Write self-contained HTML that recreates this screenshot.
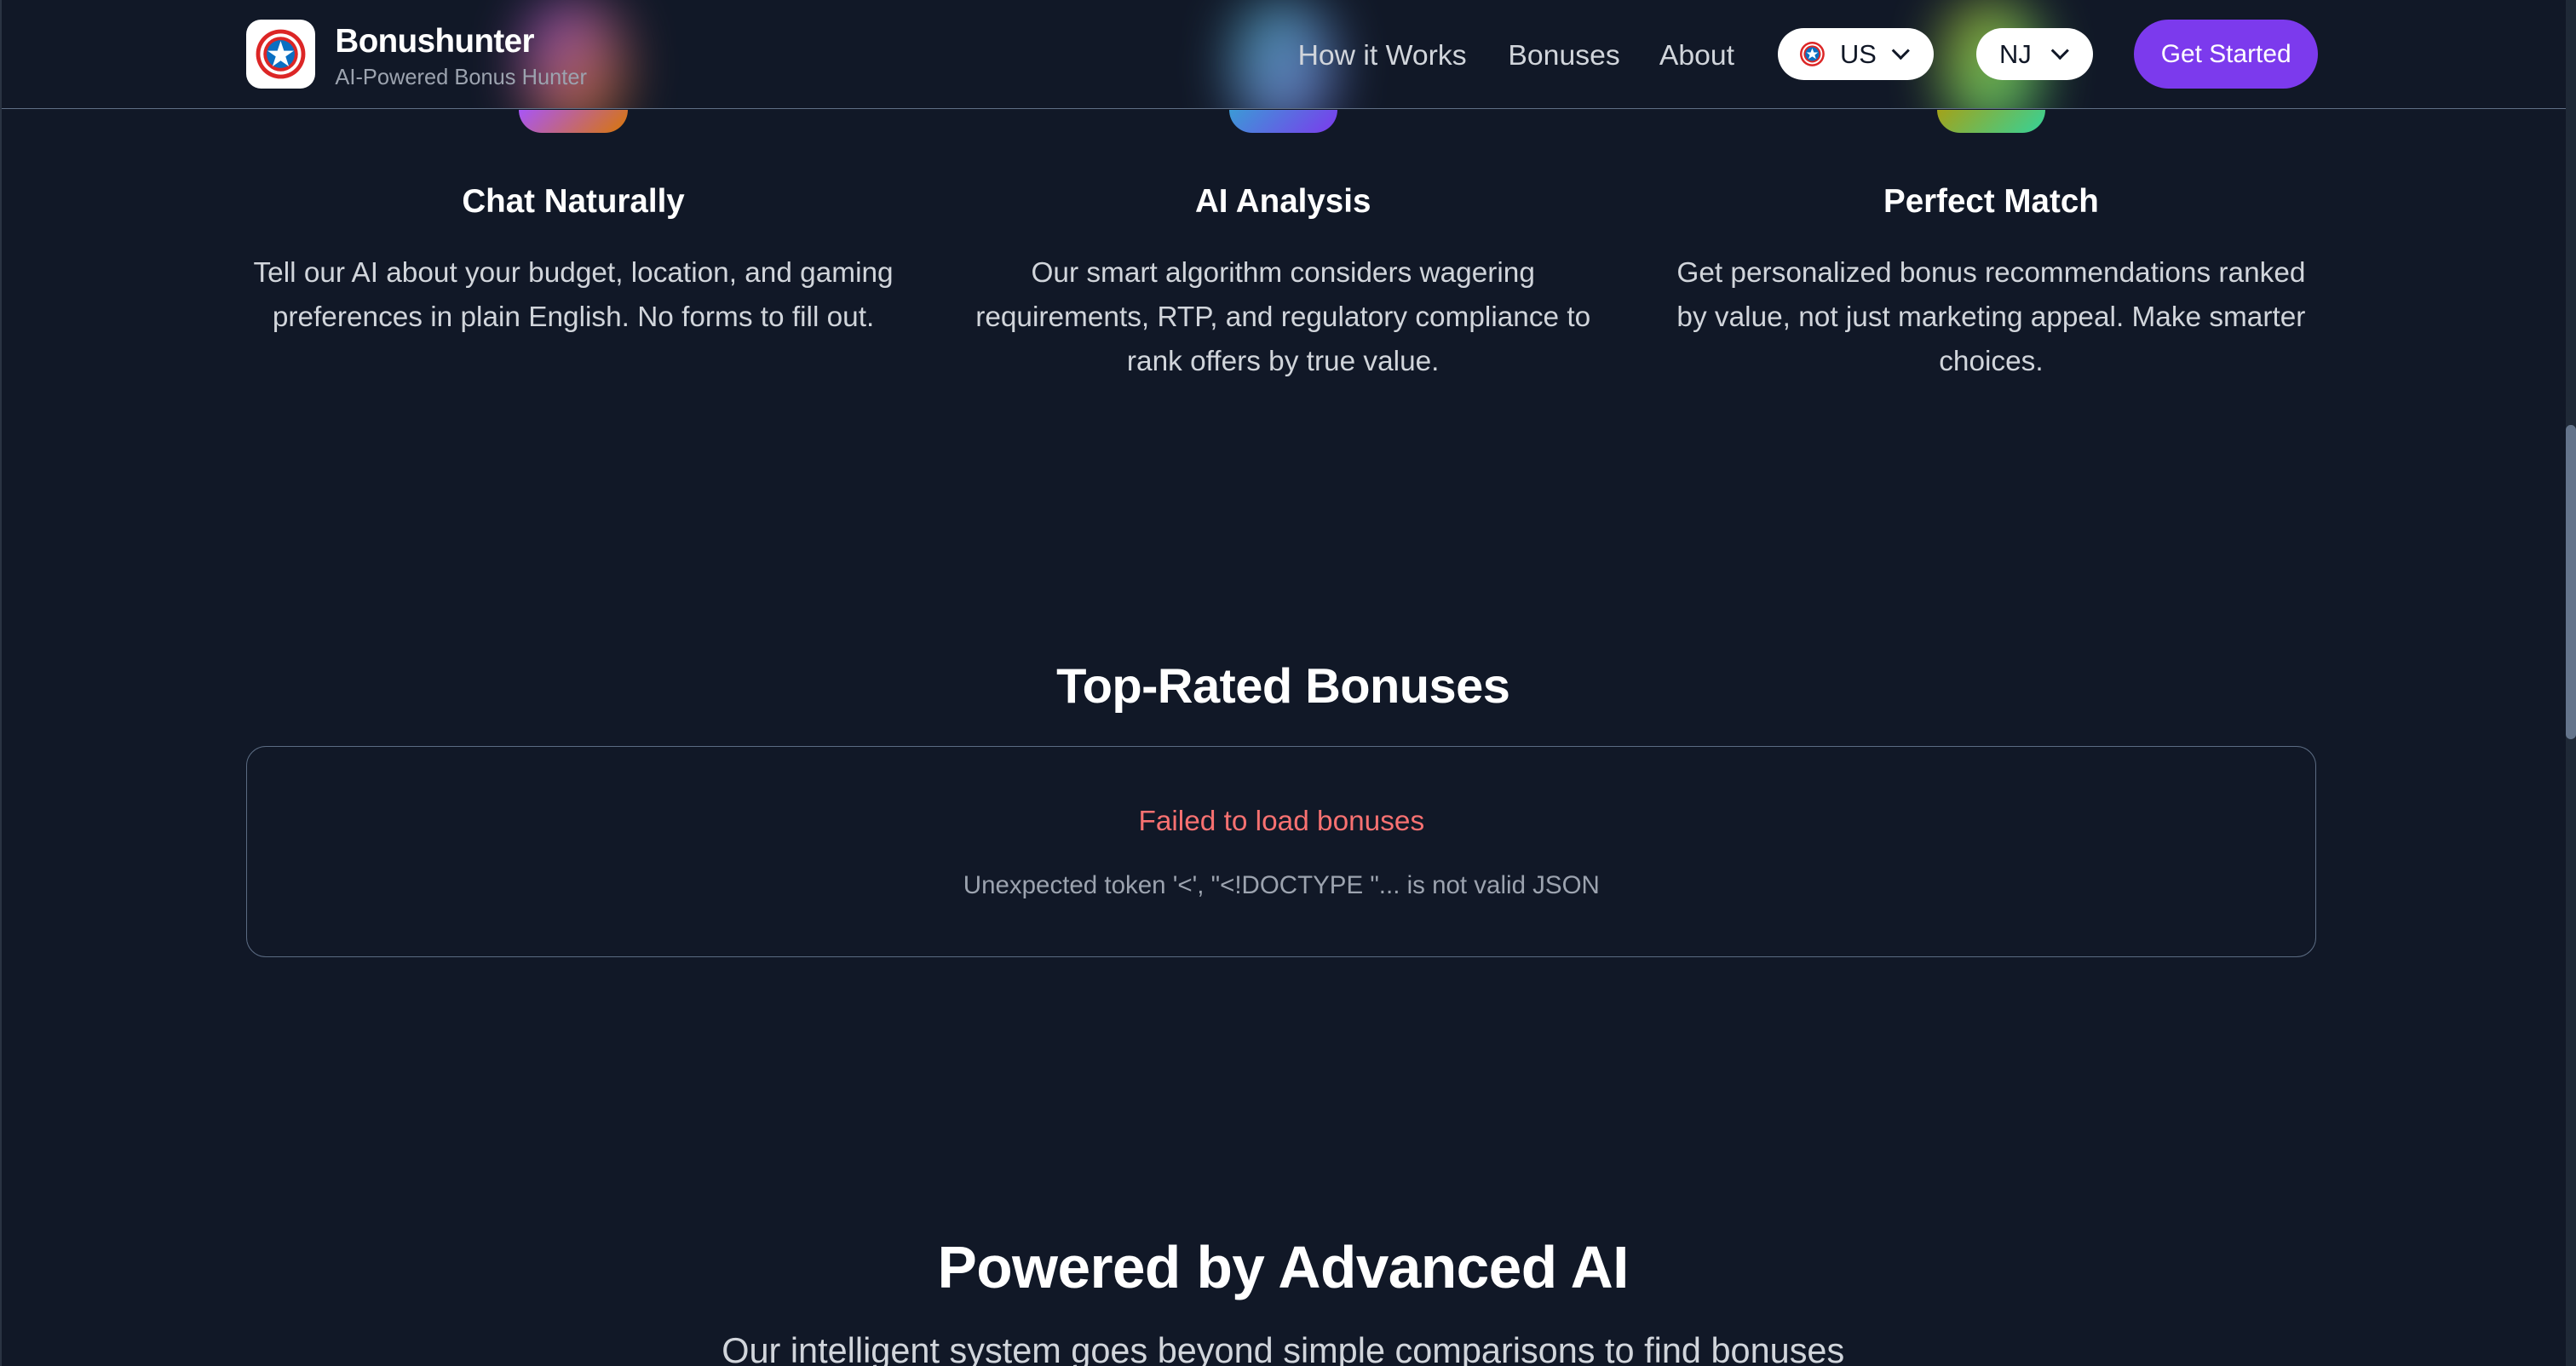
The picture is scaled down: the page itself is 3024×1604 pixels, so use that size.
<!DOCTYPE html>
<html><head><meta charset="utf-8">
<style>
html,body{margin:0;padding:0;background:#111827;overflow:hidden;width:3024px;height:1604px}
#w{zoom:1.92857;width:1568px;height:832px;position:relative;font-family:"Liberation Sans",sans-serif;color:#fff;overflow:hidden;background:#111827}
.abs{position:absolute}
.blob{position:absolute;top:67px;width:66px;height:14px;border-radius:0 0 16px 16px}
.glow{position:absolute;top:0px;width:60px;height:80px;border-radius:30px;filter:blur(16px);opacity:.8}
header{position:absolute;left:0;top:0;width:1562px;height:66px;border-bottom:1px solid #5f6e84;background:#111827;overflow:hidden}
.nav{position:absolute;top:24px;font-size:17.5px;color:#d1d5db}
.pill{position:absolute;top:17px;height:32px;background:#fff;border-radius:16px;color:#111827;font-size:16px}
.col{position:absolute;top:109px;width:400px;text-align:center}
.col h3{margin:0;font-size:20px;font-weight:bold;line-height:28px}
.col p{margin:16px 0 0;font-size:17.3px;line-height:27px;color:#d1d5db}
.chev{display:inline-block;width:6px;height:6px;border-right:1.6px solid #111827;border-bottom:1.6px solid #111827;transform:rotate(45deg);position:absolute;top:10px}
</style></head><body><div id="w">
<div class="blob" style="left:316px;background:linear-gradient(135deg,#a855f7,#d97706)"></div>
<div class="blob" style="left:748px;background:linear-gradient(135deg,#3b9ad6,#7c3aed)"></div>
<div class="blob" style="left:1179px;background:linear-gradient(135deg,#a3a21a,#34d399)"></div>
<header>
<div class="glow" style="left:319px;background:linear-gradient(135deg,#a855f7,#d97706)"></div>
<div class="glow" style="left:751px;background:linear-gradient(135deg,#4fb8c8,#7c7ae0)"></div>
<div class="glow" style="left:1182px;background:linear-gradient(135deg,#c2c22a,#4ade80)"></div>
<div class="abs" style="left:150px;top:12px;width:42px;height:42px;background:#fff;border-radius:9px">
<svg width="42" height="42" viewBox="0 0 42 42"><circle cx="21" cy="21" r="15" fill="#dc2626"/><circle cx="21" cy="21" r="12.5" fill="#fff"/><circle cx="21" cy="21" r="10.5" fill="#dc2626"/><circle cx="21" cy="21" r="8.5" fill="#0a6fc2"/><polygon points="21,13 23,19 29,19 24,22.5 26,28.5 21,25 16,28.5 18,22.5 13,19 19,19" fill="#fff"/></svg></div>
<div class="abs" style="left:204px;top:14px;font-size:20px;font-weight:bold;letter-spacing:-.3px">Bonushunter</div>
<div class="abs" style="left:204px;top:40px;font-size:13.2px;color:#9ca3af">AI-Powered Bonus Hunter</div>
<div class="nav" style="left:790px">How it Works</div>
<div class="nav" style="left:918px">Bonuses</div>
<div class="nav" style="left:1010px">About</div>
<div class="pill" style="left:1082px;width:95px"><svg class="abs" style="left:13px;top:8px" width="16" height="16" viewBox="0 0 16 16"><circle cx="8" cy="8" r="7.5" fill="#dc2626"/><circle cx="8" cy="8" r="6.2" fill="#fff"/><circle cx="8" cy="8" r="5.2" fill="#dc2626"/><circle cx="8" cy="8" r="4.2" fill="#0a6fc2"/><polygon points="8,4.5 9,7 11.5,7 9.5,8.6 10.3,11 8,9.5 5.7,11 6.5,8.6 4.5,7 7,7" fill="#fff"/></svg><span class="abs" style="left:38px;top:7px">US</span><span class="chev" style="left:71px"></span></div>
<div class="pill" style="left:1203px;width:71px"><span class="abs" style="left:14px;top:7px">NJ</span><span class="chev" style="left:47px"></span></div>
<div class="abs" style="left:1299px;top:12px;width:112px;height:42px;background:#7c3aed;border-radius:21px;font-size:15.5px;text-align:center;line-height:43px">Get Started</div>
</header>
<div class="col" style="left:149px"><h3>Chat Naturally</h3><p>Tell our AI about your budget, location, and gaming preferences in plain English. No forms to fill out.</p></div>
<div class="col" style="left:581px"><h3>AI Analysis</h3><p>Our smart algorithm considers wagering requirements, RTP, and regulatory compliance to rank offers by true value.</p></div>
<div class="col" style="left:1012px"><h3>Perfect Match</h3><p>Get personalized bonus recommendations ranked by value, not just marketing appeal. Make smarter choices.</p></div>
<div class="abs" style="left:0;width:1562px;top:401px;text-align:center;font-size:30px;font-weight:bold;letter-spacing:-.3px">Top-Rated Bonuses</div>
<div class="abs" style="left:150px;top:454px;width:1259px;height:128px;border:1px solid #5b6b82;border-radius:12px;text-align:center">
<div style="margin-top:36px;font-size:17.3px;color:#f87171">Failed to load bonuses</div>
<div style="margin-top:20px;font-size:15.3px;color:#9ca3af">Unexpected token '&lt;', "&lt;!DOCTYPE "... is not valid JSON</div></div>
<div class="abs" style="left:0;width:1562px;top:751px;text-align:center;font-size:36px;font-weight:bold;letter-spacing:-.3px">Powered by Advanced AI</div>
<div class="abs" style="left:0;width:1562px;top:810px;text-align:center;font-size:21.5px;color:#d1d5db">Our intelligent system goes beyond simple comparisons to find bonuses</div>
<div class="abs" style="left:1562px;top:0;width:6px;height:832px;background:#1f2937"></div>
<div class="abs" style="left:1562px;top:259px;width:6px;height:191px;background:#64748b;border-radius:3px"></div>
<div class="abs" style="left:0;top:0;width:1px;height:832px;background:#2a3342"></div>
</div></body></html>
